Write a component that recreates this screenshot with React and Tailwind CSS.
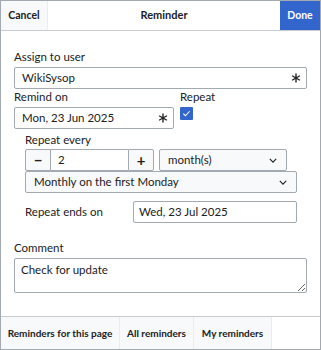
import { useState } from 'react'

const font = { fontFamily: 'Lato, "Noto Sans", sans-serif' }

function Asterisk() {
  return (
    <svg width="10" height="10" viewBox="0 0 20 20" className="text-[#202122]">
      <g stroke="currentColor" strokeWidth="2.8" strokeLinecap="butt">
        <line x1="10" y1="1" x2="10" y2="19" />
        <line x1="2.2" y1="5.5" x2="17.8" y2="14.5" />
        <line x1="2.2" y1="14.5" x2="17.8" y2="5.5" />
      </g>
    </svg>
  )
}

function Chevron() {
  return (
    <svg width="8" height="5" viewBox="0 0 10 6" className="text-[#202122]">
      <path d="M1 1l4 4 4-4" fill="none" stroke="currentColor" strokeWidth="1.4" />
    </svg>
  )
}

export default function App() {
  const [repeat, setRepeat] = useState(true)

  return (
    <div style={font} className="w-[321px] h-[350px] bg-white text-[#202122] text-[11.5px] border border-[#a2a9b1] flex flex-col">
      {/* header */}
      <div className="h-[30px] flex items-stretch border-b border-[#c8ccd1] shrink-0">
        <button className="w-[47px] bg-[#f8f9fa] border-r border-[#eaecf0] font-bold text-[10.5px] flex items-center justify-center">
          Cancel
        </button>
        <div className="flex-1 flex items-center justify-center font-bold text-[11px]">Reminder</div>
        <button className="w-[40px] bg-[#36c] text-white font-bold text-[10.5px] flex items-center justify-center">
          Done
        </button>
      </div>

      {/* body */}
      <div className="flex-1 px-[13px] pt-[19px]">
        <div className="leading-[14px] mb-[3px]">Assign to user</div>
        <div className="h-[22px] border border-[#a2a9b1] rounded-[2px] flex items-center justify-between pl-[7px] pr-[5px]">
          <span>WikiSysop</span>
          <Asterisk />
        </div>

        <div className="flex mt-[1px]">
          <div className="w-[160px]">
            <div className="leading-[14px] mb-[3px]">Remind on</div>
            <div className="h-[22px] border border-[#a2a9b1] rounded-[2px] flex items-center justify-between pl-[7px] pr-[5px]">
              <span>Mon, 23 Jun 2025</span>
              <Asterisk />
            </div>
          </div>
          <div className="ml-[6px]">
            <div className="leading-[14px] mb-[3px]">Repeat</div>
            <button
              onClick={() => setRepeat(!repeat)}
              className="w-[13px] h-[13px] mt-[1px] rounded-[1px] bg-[#36c] flex items-center justify-center"
            >
              {repeat && (
                <svg width="9" height="9" viewBox="0 0 10 10">
                  <path d="M1.5 5.2l2.3 2.3L8.5 2.5" fill="none" stroke="white" strokeWidth="1.2" />
                </svg>
              )}
            </button>
          </div>
        </div>

        {/* repeat options */}
        <div className="pl-[11px] pr-[10px] mt-[4px]">
          <div className="leading-[14px] mb-[2px]">Repeat every</div>
          <div className="flex">
            <button className="w-[26px] h-[22px] bg-[#f8f9fa] border border-[#a2a9b1] rounded-l-[2px] flex items-center justify-center text-[15px] font-bold">
              −
            </button>
            <div className="w-[77px] h-[22px] border-y border-[#a2a9b1] flex items-center pl-[7px]">2</div>
            <button className="w-[26px] h-[22px] bg-[#f8f9fa] border border-[#a2a9b1] rounded-r-[2px] flex items-center justify-center text-[15px] font-bold">
              +
            </button>
            <div className="ml-[5px] w-[128px] h-[22px] bg-[#f8f9fa] border border-[#a2a9b1] rounded-[2px] flex items-center justify-between pl-[8px] pr-[9px]">
              <span>month(s)</span>
              <Chevron />
            </div>
          </div>
          <div className="h-[22px] bg-[#f8f9fa] border border-[#a2a9b1] rounded-[2px] flex items-center justify-between pl-[8px] pr-[9px]">
            <span>Monthly on the first Monday</span>
            <Chevron />
          </div>

          <div className="flex items-center mt-[8px]">
            <div className="w-[108px]">Repeat ends on</div>
            <div className="flex-1 h-[22px] border border-[#a2a9b1] rounded-[2px] flex items-center pl-[5px]">
              Wed, 23 Jul 2025
            </div>
          </div>
        </div>

        <div className="leading-[14px] mt-[18px] mb-[3px]">Comment</div>
        <textarea
          defaultValue="Check for update"
          style={font}
          className="block w-full h-[35px] border border-[#a2a9b1] rounded-[2px] px-[6px] py-[2px] text-[11.5px] text-[#202122] outline-none"
        />
      </div>

      {/* footer */}
      <div className="h-[33px] flex border-t border-[#c8ccd1] shrink-0 text-[10px] font-bold whitespace-nowrap">
        <button className="w-[119px] bg-[#f8f9fa] border-r border-[#eaecf0] flex items-center justify-center">
          Reminders for this page
        </button>
        <button className="w-[74px] bg-[#f8f9fa] border-r border-[#eaecf0] flex items-center justify-center">
          All reminders
        </button>
        <button className="w-[78px] bg-[#f8f9fa] border-r border-[#eaecf0] flex items-center justify-center">
          My reminders
        </button>
      </div>
    </div>
  )
}
